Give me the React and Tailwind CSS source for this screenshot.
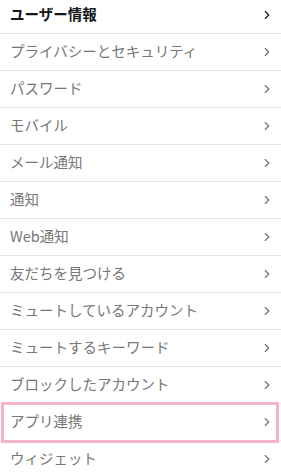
import { ChevronRight } from "lucide-react";

const items = [
  "ユーザー情報",
  "プライバシーとセキュリティ",
  "パスワード",
  "モバイル",
  "メール通知",
  "通知",
  "Web通知",
  "友だちを見つける",
  "ミュートしているアカウント",
  "ミュートするキーワード",
  "ブロックしたアカウント",
  "アプリ連携",
  "ウィジェット",
];

export default function App() {
  return (
    <div
      className="w-[281px] h-[473px] overflow-hidden bg-white"
      style={{ fontFamily: '"Noto Sans CJK JP", "Liberation Sans", sans-serif' }}
    >
      <ul className="-mt-[3px]">
        {items.map((label, i) => {
          const active = i === 0;
          const marked = label === "アプリ連携";
          return (
            <li key={label} className="relative">
              <div className="flex items-center justify-between h-[37px] pl-[10px] pr-[7px] border-b border-[#e8e8e8]">
                <span
                  className={`text-[14.5px] leading-none pb-[1px] ${
                    active ? "font-bold text-[#14171a]" : "text-[#777777]"
                  }`}
                >
                  {label}
                </span>
                <ChevronRight
                  className={`w-[14px] h-[14px] ${active ? "text-[#14171a]" : "text-[#6b7280]"}`}
                  strokeWidth={2}
                />
              </div>
              {marked && (
                <div className="absolute left-[1px] right-[2px] -top-[2px] -bottom-[2px] border-[3px] border-[#f4b3cd] pointer-events-none" />
              )}
            </li>
          );
        })}
      </ul>
    </div>
  );
}
